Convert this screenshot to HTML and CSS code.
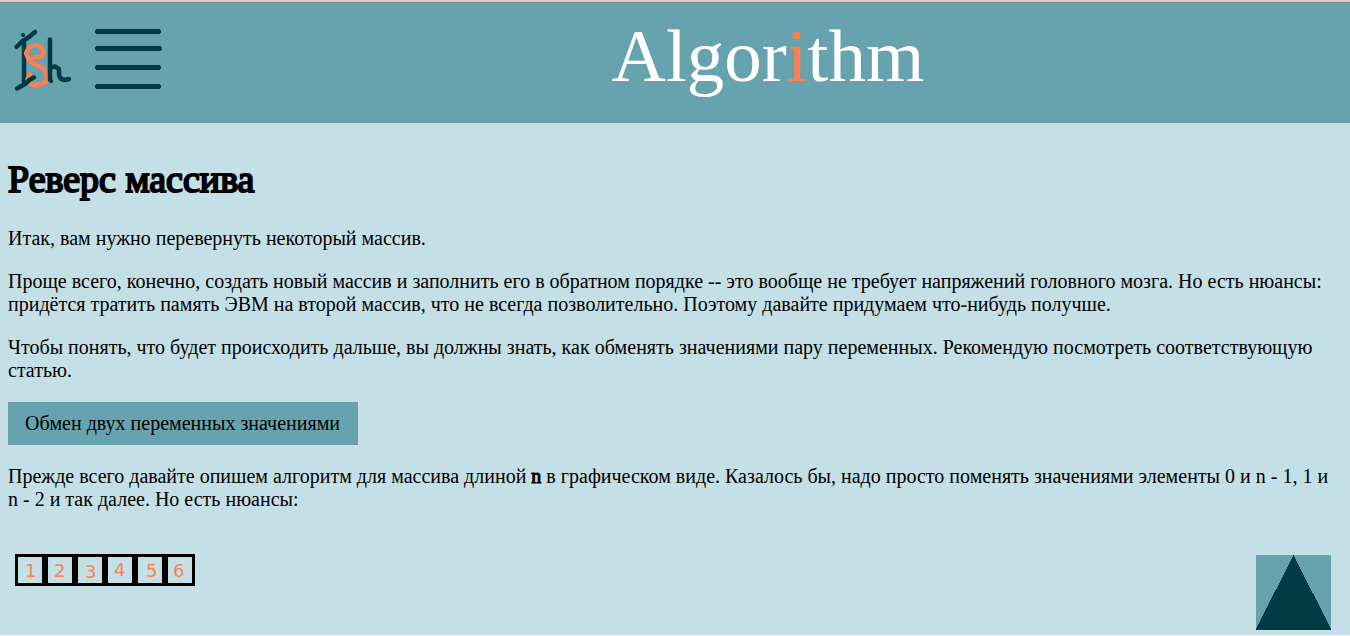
FILE: index.html
```html
<!DOCTYPE html>
<html lang="ru">
<head>
<meta charset="utf-8">
<title>Algorithm</title>
<link rel="stylesheet" href="styles.css">
</head>
<body>
<header class="header">
  <a class="logo" href="#" aria-label="Главная">
    <svg width="72" height="80" viewBox="0 20 72 80" fill="none" stroke="#003b44" stroke-width="4.500" stroke-linecap="round" stroke-linejoin="round">
      <path d="M24 42V82"/>
      <path stroke-width="4" d="M23 35H23.1"/>
      <path stroke="#ff7f50" d="M33.500 57H41.500L43.200 54V51L40 46.700L35 45L29 47.500L26 53.300L29 60L35 64.500L43 68L46.500 73.300L47 81L42 84L34 85L28.500 82.700L27.500 79L30 74.500"/>
      <path d="M16.500 47L22 41.500L29 37L35 32M17 88.500L25 84L30 79.500L34 77.500M50 39.500V80L51 81M51 67.500L55 66.500L59 69V75L61 79L65 80L69 79"/>
    </svg>
  </a>
  <button class="menu" type="button" aria-label="Меню">
    <svg width="68" height="64" viewBox="94 27 68 64" stroke="#003b44" stroke-width="5" stroke-linecap="round" shape-rendering="crispEdges">
      <path d="M97.500 31.500H158.500M97.500 48.500H159.500M97.500 67.500H158.500M97.500 86.500H158.500"/>
    </svg>
  </button>
  <div class="brand">Algor<span class="accent">i</span>thm</div>
</header>
<main class="content">
  <h1 class="title">Реверс массива</h1>
  <p>Итак, вам нужно перевернуть некоторый массив.</p>
  <p>Проще всего, конечно, создать новый массив и заполнить его в обратном порядке -- это вообще не требует напряжений головного мозга. Но есть нюансы: придётся тратить память ЭВМ на второй массив, что не всегда позволительно. Поэтому давайте придумаем что-нибудь получше.</p>
  <p>Чтобы понять, что будет происходить дальше, вы должны знать, как обменять значениями пару переменных. Рекомендую посмотреть соответствующую статью.</p>
  <a class="article" href="#">Обмен двух переменных значениями</a>
  <p>Прежде всего давайте опишем алгоритм для массива длиной <b class="var">n</b> в графическом виде. Казалось бы, надо просто поменять значениями элементы 0 и n - 1, 1 и n - 2 и так далее. Но есть нюансы:</p>
  <svg class="array" width="200" height="40" viewBox="8 550 200 40" role="img" aria-label="Массив из шести элементов">
    <path d="M15 554H195V586H15Z"/>
    <path class="cell" d="M18 557h24v26h-24zM48 557h24v26h-24zM78 557h24v26h-24zM108 557h24v26h-24zM138 557h24v26h-24zM168 557h24v26h-24z"/>
    <g class="digits">
      <text x="25" y="577">1</text><text x="54" y="577">2</text><text x="85" y="578">3</text><text x="114" y="576">4</text><text x="146" y="577">5</text><text x="173" y="577">6</text>
    </g>
  </svg>
</main>
<a class="to-top" href="#" aria-label="Наверх">
  <svg width="75" height="75" viewBox="0 0 75 75" shape-rendering="crispEdges"><path fill="#67a3ae" d="M0 0H75V75H0Z"/><path fill="#003b44" d="M37.500 0L75 74V75H0V74Z"/></svg>
</a>
</body>
</html>
```
FILE: styles.css
```css
body {
  margin: 0;
  min-height: 100vh;
  box-sizing: border-box;
  border-top: 2px solid #d4d0cf;
  border-bottom: 1px solid #f2f2f2;
  background: #c5dfe6;
  color: #000;
  font: 20px/23px "Liberation Serif", "Times New Roman", serif;
}
.header {
  display: flex;
  align-items: flex-start;
  box-sizing: border-box;
  height: 121px;
  border-top: 1px solid #858585;
  background: #67a3ae;
}
.logo {
  display: flex;
  padding-top: 17px;
}
.menu {
  margin: 24px 24px 0 22px;
  padding: 0;
  border: 0;
  background: none;
  line-height: 0;
  cursor: pointer;
}
.brand {
  flex: 1;
  padding-top: 10px;
  color: #fff;
  font-size: 75px;
  line-height: 86px;
  text-align: center;
}
.accent {
  color: #ff7f50;
}
.content {
  padding: 33px 8px 0;
}
.content p {
  margin: 0 0 20px;
}
.title {
  margin: 0 0 25px;
  font-size: 38px;
  font-weight: 400;
  line-height: 46px;
  -webkit-text-stroke: 2px #000;
}
.var {
  font-weight: 400;
  -webkit-text-stroke: 1px #000;
}
.article {
  display: block;
  width: fit-content;
  margin-bottom: 20px;
  padding: 10px 18px 10px 17px;
  background: #67a3ae;
  color: #000;
  text-decoration: none;
}
.array {
  display: block;
  margin-top: 39px;
}
.cell {
  fill: #c5dfe6;
}
.digits {
  fill: #ff7f50;
  font: 18px "DejaVu Sans", sans-serif;
}
.to-top {
  position: fixed;
  right: 19px;
  bottom: 6px;
  line-height: 0;
}
```
